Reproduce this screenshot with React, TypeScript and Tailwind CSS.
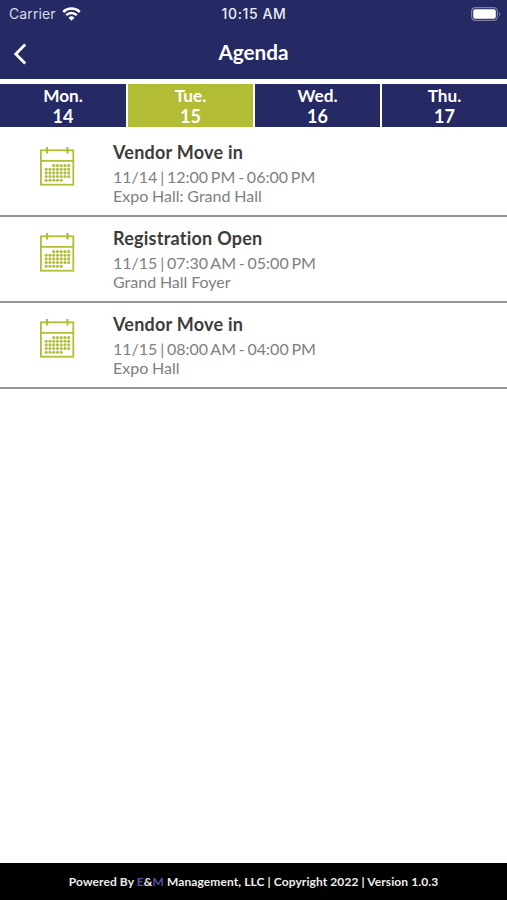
const days = [
  { name: 'Mon.', date: 14, active: false },
  { name: 'Tue.', date: 15, active: true },
  { name: 'Wed.', date: 16, active: false },
  { name: 'Thu.', date: 17, active: false },
]

const events = [
  { title: 'Vendor Move in', time: '11/14 | 12:00 PM - 06:00 PM', place: 'Expo Hall: Grand Hall' },
  { title: 'Registration Open', time: '11/15 | 07:30 AM - 05:00 PM', place: 'Grand Hall Foyer' },
  { title: 'Vendor Move in', time: '11/15 | 08:00 AM - 04:00 PM', place: 'Expo Hall' },
]

// first and last filled column of each week
const weeks = [
  [2, 6],
  [0, 6],
  [0, 6],
  [0, 6],
  [0, 4],
]

function CalendarIcon() {
  return (
    <svg width="36" height="40" viewBox="0 0 36 40" className="shrink-0" fill="none" stroke="#b2bd35" strokeWidth="1.8">
      <rect x="1.9" y="4.3" width="32.4" height="34.4" />
      <path d="M1.8 14.9h32.4" />
      <path d="M8 1v6.4M28.5 1v6.4" strokeWidth="2.2" />
      {weeks.map(([from, to], row) =>
        Array.from({ length: to - from + 1 }, (_, i) => (
          <circle key={`${row}-${i}`} cx={7.2 + (from + i) * 3.75} cy={19.6 + row * 3.65} r="1.55" fill="#b2bd35" stroke="none" />
        ))
      )}
    </svg>
  )
}

function StatusBar() {
  return (
    <div className="grid h-[27px] grid-cols-3 items-center pl-[9px] pr-[6px] font-['Inter',sans-serif] text-[14px] leading-none">
      <div className="flex items-center gap-[6px] text-[#d9dbe8]">
        <span className="tracking-[0.1px]">Carrier</span>
        <svg width="19" height="14" viewBox="0 0 19 14" fill="none" stroke="white" strokeWidth="2.5">
          <path d="M1.2 5a11.8 11.8 0 0 1 16.6 0" />
          <path d="M4.2 8.2a7.6 7.6 0 0 1 10.6 0" />
          <path d="M6.5 10.8a4.3 4.3 0 0 1 6 0L9.5 13.8z" fill="white" stroke="none" />
        </svg>
      </div>
      <div className="-ml-[2px] text-center font-medium tracking-[0.6px] text-[#eceef6]">10:15 AM</div>
      <svg width="30" height="14" viewBox="0 0 30 14" className="justify-self-end">
        <rect x="0.6" y="0.6" width="25.8" height="12.8" rx="3.8" fill="none" stroke="#7d80a8" strokeWidth="1.2" />
        <rect x="2.2" y="2.2" width="22.6" height="9.6" rx="2" fill="white" />
        <path d="M28 4.8c1.6.7 1.6 3.7 0 4.4z" fill="#7d80a8" />
      </svg>
    </div>
  )
}

export default function App() {
  return (
    <div className="flex h-screen flex-col bg-white font-['Lato',sans-serif] [font-variant-ligatures:none]">
      {/* Header */}
      <header className="h-[79px] shrink-0 bg-[#252a64] text-white">
        <StatusBar />
        <div className="grid h-[52px] grid-cols-[40px_1fr_40px] items-center">
          <button className="pl-[13px] pt-[2px]" aria-label="Back">
            <svg width="14" height="22" viewBox="0 0 14 22" fill="none" stroke="white" strokeWidth="2.8">
              <path d="M12.2 1.6L2.8 11l9.4 9.4" />
            </svg>
          </button>
          <h1 className="pb-[2px] text-center text-[20.7px] font-bold leading-none">Agenda</h1>
        </div>
      </header>

      {/* Days */}
      <nav className="mt-[5px] grid h-[43px] shrink-0 grid-cols-[126px_125px_125px_125px] gap-[2px]">
        {days.map(day => (
          <button
            key={day.date}
            className={`flex flex-col items-center pt-px text-[18px] font-bold leading-[21px] text-white ${day.active ? 'bg-[#b2bd35]' : 'bg-[#252a64]'}`}
          >
            <span className="text-[17.2px]">{day.name}</span>
            <span>{day.date}</span>
          </button>
        ))}
      </nav>

      {/* Events */}
      <main className="flex-1 pt-[4px]">
        {events.map((event, i) => (
          <div key={i} className="flex h-[86px] border-b-2 border-[#959595] pl-[39px] pt-[10px]">
            <div className="w-[74px] pt-[5px]">
              <CalendarIcon />
            </div>
            <div className="text-[16px] leading-[19px] text-[#808080]">
              <h2 className="mb-[4px] text-[18px] font-bold leading-[22px] tracking-[0.24px] text-[#3c3c3c]">{event.title}</h2>
              <p className="[word-spacing:-1.3px]">{event.time}</p>
              <p className="[word-spacing:-0.3px]">{event.place}</p>
            </div>
          </div>
        ))}
      </main>

      {/* Footer */}
      <footer className="flex h-[37px] shrink-0 items-center justify-center bg-black text-[12px] font-bold tracking-[0.09px] text-[#ededed]">
        <p>
          Powered By <span className="text-[#5a4fa0]">E</span>&amp;<span className="text-[#5a4fa0]">M</span> Management, LLC | Copyright 2022 | Version 1.0.3
        </p>
      </footer>
    </div>
  )
}
